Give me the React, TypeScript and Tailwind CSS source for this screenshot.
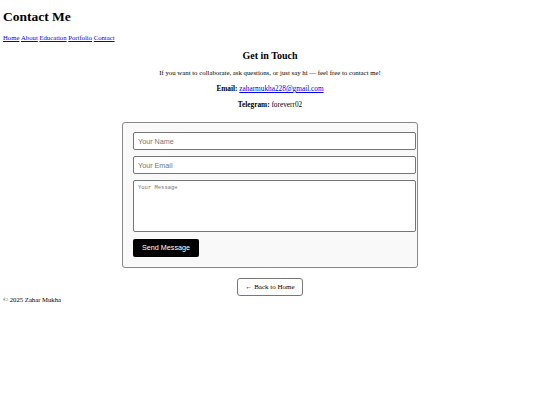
import React from 'react';

const links = ['Home', 'About', 'Education', 'Portfolio', 'Contact'];

export default function App() {
  return (
    <div className="min-h-screen bg-white font-['Liberation_Serif',serif] text-[6.7px] leading-[8px] text-black">
      <header className="px-[3px] pt-[9px]">
        <h1 className="text-[13.5px] font-bold leading-[15px]">Contact Me</h1>
        <nav className="mt-[10px] flex gap-[1.7px]">
          {links.map((l) => (
            <a key={l} href="#" className="text-[#0000ee] underline">
              {l}
            </a>
          ))}
        </nav>
      </header>

      <main className="flex flex-col items-center pt-[8px]">
        <h2 className="text-[10px] font-bold leading-[12px]">Get in Touch</h2>
        <p className="mt-[7px] text-[6.8px]">
          If you want to collaborate, ask questions, or just say hi — feel free to contact me!
        </p>
        <p className="mt-[8px] text-[7.3px]">
          <strong>Email:</strong>{' '}
          <a href="#" className="text-[#0000ee] underline">
            zaharmukha228@gmail.com
          </a>
        </p>
        <p className="mt-[8px] text-[7.3px]">
          <strong>Telegram:</strong> foreverr02
        </p>

        <form className="mt-[13px] flex w-[296px] flex-col rounded-[3px] border border-[#888] bg-[#f9f9f9] pb-[10px] pl-[10px] pt-[9px]">
          <input
            placeholder="Your Name"
            className="h-[18px] w-[283px] rounded-[2px] border border-[#767676] bg-white px-[4px] font-['Liberation_Sans',sans-serif] text-[7.2px] outline-none placeholder:text-[#757575]"
          />
          <input
            placeholder="Your Email"
            className="mt-[6px] h-[18px] w-[283px] rounded-[2px] border border-[#767676] bg-white px-[4px] font-['Liberation_Sans',sans-serif] text-[7.2px] outline-none placeholder:text-[#757575]"
          />
          <textarea
            placeholder="Your Message"
            className="mt-[6px] h-[52px] w-[283px] resize-none rounded-[2px] border border-[#767676] bg-white px-[4px] py-[3px] font-['Liberation_Mono',monospace] text-[5.5px] leading-[7px] outline-none placeholder:text-[#757575]"
          />
          <button
            type="button"
            className="mt-[7px] h-[18px] w-[66px] rounded-[2px] bg-black font-['Liberation_Sans',sans-serif] text-[7.2px] text-white"
          >
            Send Message
          </button>
        </form>

        <button
          type="button"
          className="mt-[10px] h-[18px] w-[66px] rounded-[3px] border border-[#767676] bg-white text-[7px]"
        >
          ← Back to Home
        </button>
      </main>

      <footer className="px-[3px]">© 2025 Zahar Mukha</footer>
    </div>
  );
}
